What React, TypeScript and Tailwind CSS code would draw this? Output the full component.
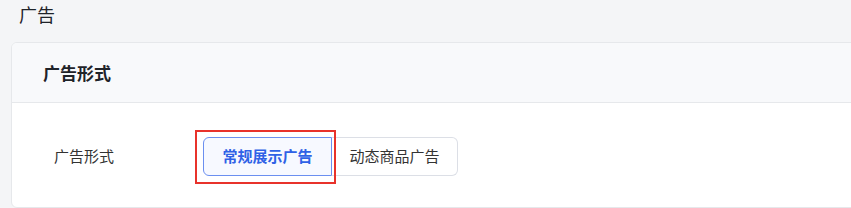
import React from "react";

export default function App() {
  const font = { fontFamily: '"Noto Sans CJK SC", "Noto Sans", sans-serif' };
  return (
    <div className="w-[851px] h-[208px] overflow-hidden bg-[#f4f5f7]" style={font}>
      <div className="h-[42px] pl-[19px] pt-[1px] text-[18px] leading-[26px] text-[#1f2329]">广告</div>
      <div className="ml-[11px] w-[880px] h-[166px] rounded-md border border-[#e6e8eb] bg-white overflow-hidden">
        <div className="h-[60px] bg-[#f8f9fb] border-b border-[#e6e8eb] flex items-center pl-[31px] text-[17px] font-semibold text-[#1f2329]">
          广告形式
        </div>
        <div className="flex items-center pt-[34px] pl-[42px]">
          <div className="w-[149px] text-[15px] text-[#333]">广告形式</div>
          <div className="flex">
            <div className="relative">
              <button className="h-[39px] w-[129px] rounded-l-md border border-[#6b8ff0] bg-[#f7f9ff] text-[15px] font-semibold text-[#2f62e6]">
                常规展示广告
              </button>
              <div className="absolute left-[-8px] top-[-7px] w-[141px] h-[54px] border-2 border-[#e8322b] pointer-events-none" />
            </div>
            <button className="h-[39px] w-[126px] rounded-r-md border border-l-0 border-[#dcdfe6] bg-white text-[15px] text-[#333]">
              动态商品广告
            </button>
          </div>
        </div>
      </div>
    </div>
  );
}
